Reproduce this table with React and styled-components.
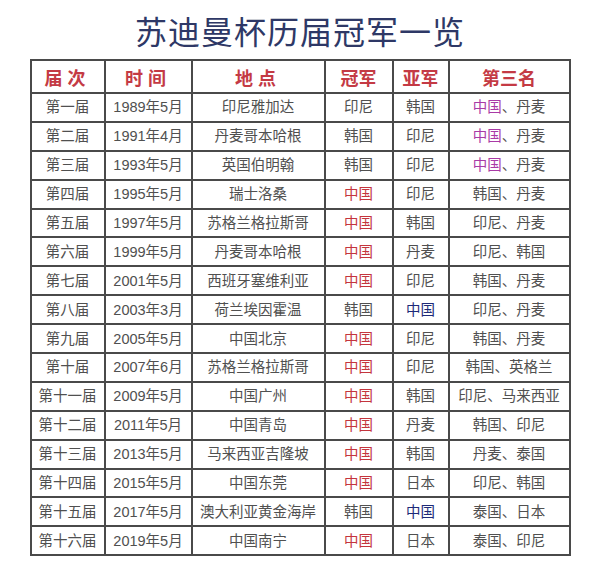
import React from 'react';
import styled, {createGlobalStyle} from 'styled-components';

const GlobalStyle = createGlobalStyle`
  html, body {
    margin: 0;
    padding: 0;
    background: #ffffff;
  }
  body {
    font-family: "Liberation Sans", "Noto Sans CJK SC", sans-serif;
  }
`;

const Page = styled.div`
  width: 600px;
  height: 568px;
  display: flex;
  flex-direction: column;
  align-items: center;
  padding-top: 9px;
  box-sizing: border-box;
`;

const Title = styled.h1`
  margin: 0 0 8px 0;
  font-family: "Noto Sans CJK SC", serif;
  font-weight: 400;
  font-size: 32px;
  line-height: 42px;
  letter-spacing: 1px;
  color: #2e3866;
`;

const Table = styled.table`
  width: 539px;
  border-collapse: collapse;
  table-layout: fixed;
  border: 2px solid #4a4a4a;
`;

const HeadCell = styled.th`
  height: 31px;
  padding: 0;
  border: 2px solid #4a4a4a;
  font-family: "Noto Sans CJK SC", serif;
  font-weight: 700;
  font-size: 18px;
  color: #c43a44;
  letter-spacing: ${({spaced}) => (spaced ? '5px' : '0')};
  text-align: center;
`;

const Cell = styled.td`
  height: 26.9px;
  padding: 0;
  border: 2px solid #4a4a4a;
  font-size: 14.5px;
  line-height: 16px;
  color: #505050;
  text-align: center;
  white-space: nowrap;
`;

const Mark = styled.span`
  color: ${({tone}) =>
    tone === 'red' ? '#c4353d' : tone === 'navy' ? '#1e2a78' : '#a93aa6'};
`;

const columns = [
  {title: '届次', width: 74, spaced: true},
  {title: '时间', width: 87, spaced: true},
  {title: '地点', width: 133, spaced: true},
  {title: '冠军', width: 68},
  {title: '亚军', width: 56},
  {title: '第三名', width: 121},
];

const rows = [
  ['第一届', '1989年5月', '印尼雅加达', '印尼', '韩国', 'P'],
  ['第二届', '1991年4月', '丹麦哥本哈根', '韩国', '印尼', 'P'],
  ['第三届', '1993年5月', '英国伯明翰', '韩国', '印尼', 'P'],
  ['第四届', '1995年5月', '瑞士洛桑', 'R', '印尼', '韩国、丹麦'],
  ['第五届', '1997年5月', '苏格兰格拉斯哥', 'R', '韩国', '印尼、丹麦'],
  ['第六届', '1999年5月', '丹麦哥本哈根', 'R', '丹麦', '印尼、韩国'],
  ['第七届', '2001年5月', '西班牙塞维利亚', 'R', '印尼', '韩国、丹麦'],
  ['第八届', '2003年3月', '荷兰埃因霍温', '韩国', 'N', '印尼、丹麦'],
  ['第九届', '2005年5月', '中国北京', 'R', '印尼', '韩国、丹麦'],
  ['第十届', '2007年6月', '苏格兰格拉斯哥', 'R', '印尼', '韩国、英格兰'],
  ['第十一届', '2009年5月', '中国广州', 'R', '韩国', '印尼、马来西亚'],
  ['第十二届', '2011年5月', '中国青岛', 'R', '丹麦', '韩国、印尼'],
  ['第十三届', '2013年5月', '马来西亚吉隆坡', 'R', '韩国', '丹麦、泰国'],
  ['第十四届', '2015年5月', '中国东莞', 'R', '日本', '印尼、韩国'],
  ['第十五届', '2017年5月', '澳大利亚黄金海岸', '韩国', 'N', '泰国、日本'],
  ['第十六届', '2019年5月', '中国南宁', 'R', '日本', '泰国、印尼'],
];

// short codes mark the coloured "中国" cells
const renderValue = value => {
  if (value === 'R') return <Mark tone="red">中国</Mark>;
  if (value === 'N') return <Mark tone="navy">中国</Mark>;
  if (value === 'P')
    return (
      <>
        <Mark tone="purple">中国</Mark>、丹麦
      </>
    );
  return value;
};

const App = () => (
  <>
    <GlobalStyle />
    <Page>
      <Title>苏迪曼杯历届冠军一览</Title>
      <Table>
        <colgroup>
          {columns.map(c => (
            <col key={c.title} style={{width: c.width}} />
          ))}
        </colgroup>
        <thead>
          <tr>
            {columns.map(c => (
              <HeadCell key={c.title} spaced={c.spaced}>
                {c.title}
              </HeadCell>
            ))}
          </tr>
        </thead>
        <tbody>
          {rows.map(r => (
            <tr key={r[0]}>
              {r.map((v, i) => (
                <Cell key={i}>{renderValue(v)}</Cell>
              ))}
            </tr>
          ))}
        </tbody>
      </Table>
    </Page>
  </>
);

export default App;
